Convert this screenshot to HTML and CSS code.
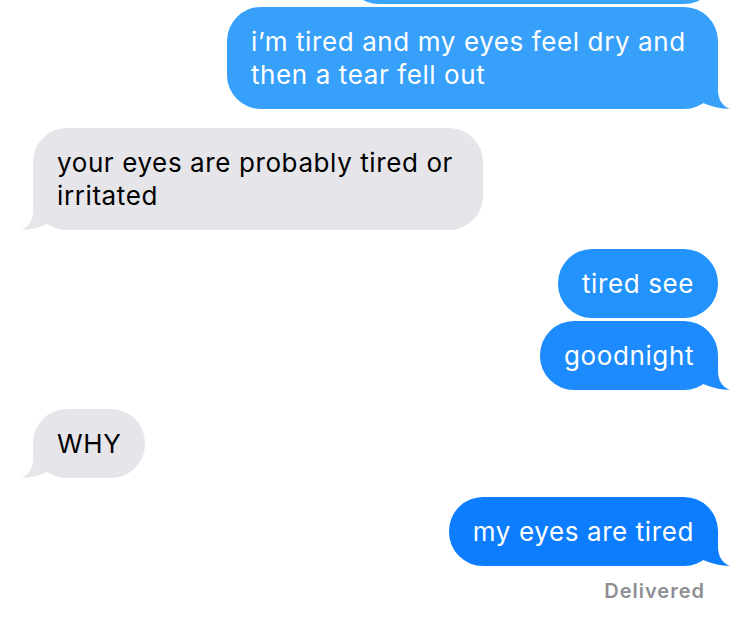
FILE: index.html
```html
<!DOCTYPE html>
<html lang="en">
<head>
<meta charset="utf-8">
<title>Messages</title>
<link rel="stylesheet" href="styles.css">
</head>
<body>
<main class="thread">
  <div class="bubble sent tone-0 partial" aria-hidden="true"></div>

  <div class="bubble sent tone-1 cont">i’m tired and my eyes feel dry and then a tear fell out
    <svg class="tail" viewBox="0 0 32 34"><path d="M0 0 H18 V15 C18 24 22 31 30 34 C22 34 10 31 3 28 L0 30 Z"/></svg>
  </div>

  <div class="bubble received group">your eyes are probably tired or irritated
    <svg class="tail" viewBox="0 0 32 34"><path d="M0 0 H18 V15 C18 24 22 31 30 34 C22 34 10 31 3 28 L0 30 Z"/></svg>
  </div>

  <div class="bubble sent tone-2 group">tired see</div>
  <div class="bubble sent tone-3 cont">goodnight
    <svg class="tail" viewBox="0 0 32 34"><path d="M0 0 H18 V15 C18 24 22 31 30 34 C22 34 10 31 3 28 L0 30 Z"/></svg>
  </div>

  <div class="bubble received group">WHY
    <svg class="tail" viewBox="0 0 32 34"><path d="M0 0 H18 V15 C18 24 22 31 30 34 C22 34 10 31 3 28 L0 30 Z"/></svg>
  </div>

  <div class="bubble sent tone-4 group">my eyes are tired
    <svg class="tail" viewBox="0 0 32 34"><path d="M0 0 H18 V15 C18 24 22 31 30 34 C22 34 10 31 3 28 L0 30 Z"/></svg>
  </div>
  <div class="status">Delivered</div>
</main>
</body>
</html>
```

FILE: styles.css
```css
html, body {
  margin: 0;
  background: #ffffff;
}

body {
  font-family: Inter, "Noto Sans", "Liberation Sans", sans-serif;
  overflow: hidden;
}

.thread {
  display: flex;
  flex-direction: column;
  padding: 0 32px 0 33px;
}

.bubble {
  position: relative;
  box-sizing: border-box;
  padding: 18px 24px 18px 24px;
  border-radius: 34px;
  font-size: 26px;
  line-height: 33px;
  letter-spacing: 0.6px;
  background: var(--bg);
}

.bubble.group {
  margin-top: 19px;
}

.bubble.cont {
  margin-top: 3px;
}

.sent {
  align-self: flex-end;
  max-width: 491px;
  color: #ffffff;
}

.received {
  align-self: flex-start;
  max-width: 450px;
  color: #000000;
  --bg: #e5e5ea;
}

.partial {
  width: 373px;
  height: 69px;
  margin-top: -65px;
}

.tone-0 { --bg: #3aa4fa; }
.tone-1 { --bg: #37a0fb; }
.tone-2 { --bg: #2292fd; }
.tone-3 { --bg: #1d8bfd; }
.tone-4 { --bg: #0b7dfe; }

.tail {
  position: absolute;
  bottom: 0;
  width: 32px;
  height: 34px;
  fill: var(--bg);
}

.sent .tail {
  right: -14px;
}

.received .tail {
  left: -14px;
  transform: scaleX(-1);
}

.status {
  align-self: flex-end;
  margin-top: 13px;
  margin-right: 13px;
  font-size: 20px;
  line-height: 24px;
  font-weight: 600;
  letter-spacing: 1px;
  color: #8e8e93;
}
```
